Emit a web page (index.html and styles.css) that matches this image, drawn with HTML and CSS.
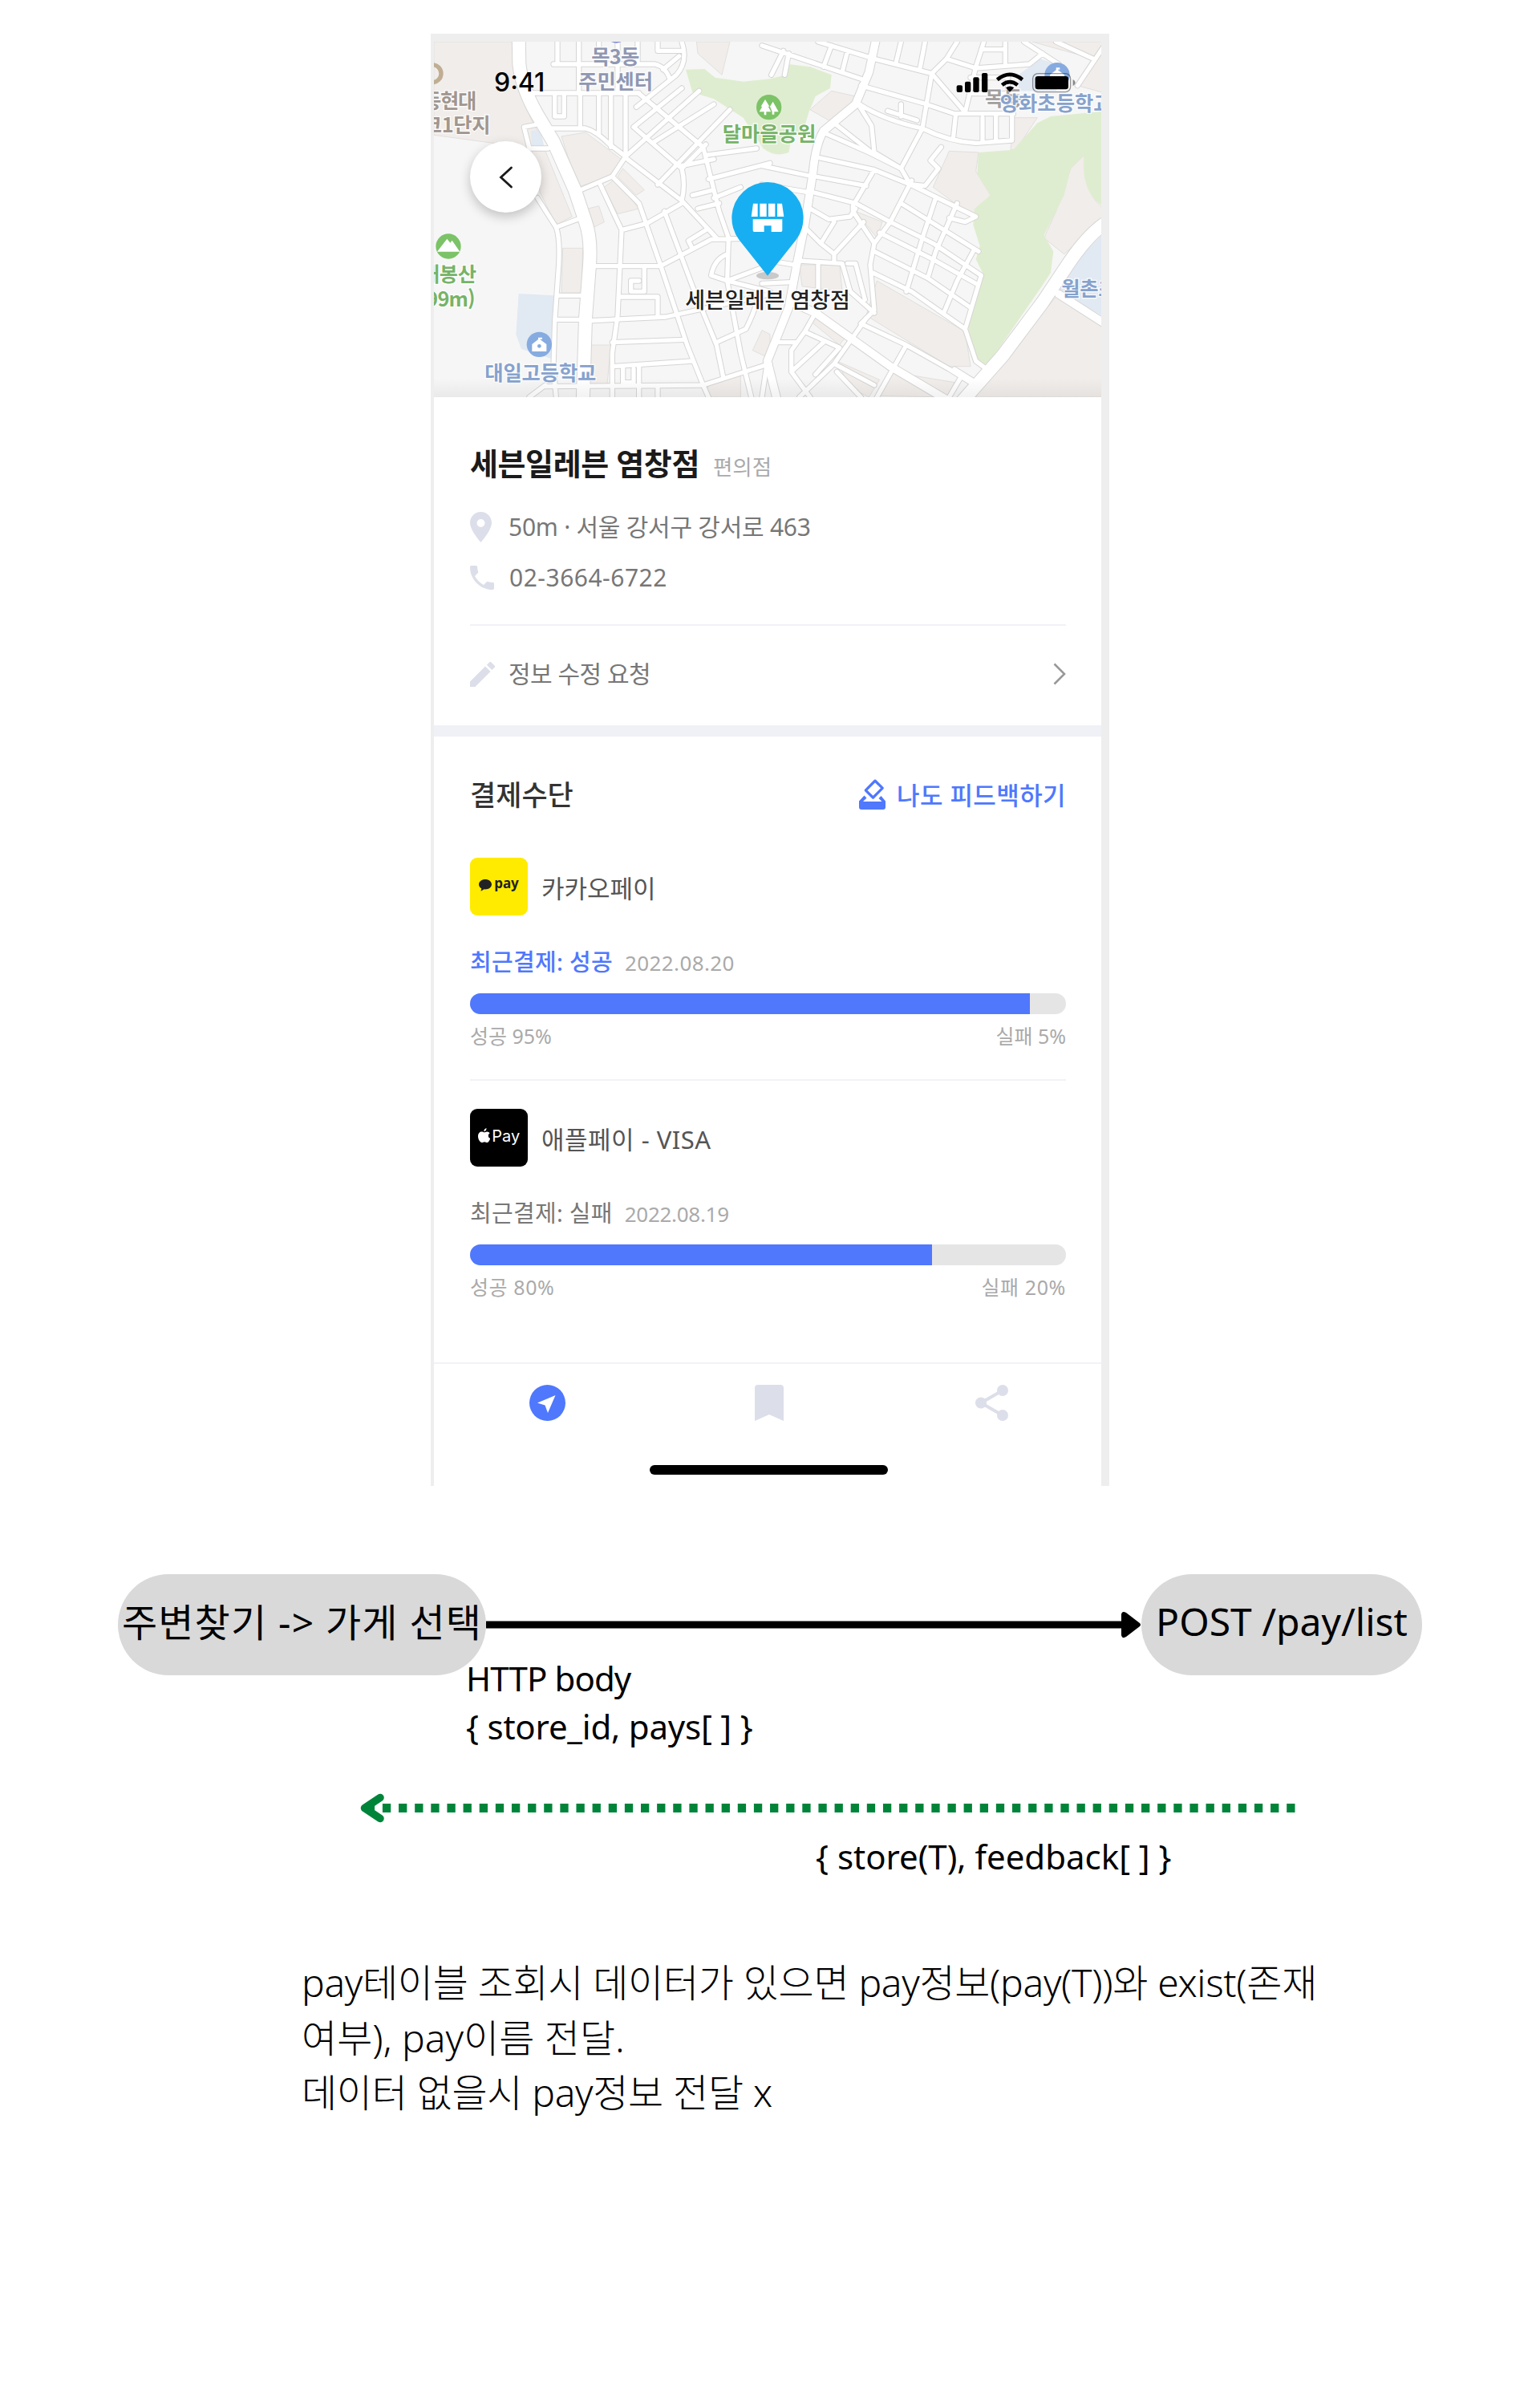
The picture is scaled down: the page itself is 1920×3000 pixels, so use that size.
FILE: index.html
```html
<!DOCTYPE html>
<html lang="ko">
<head>
<meta charset="utf-8">
<title>주변찾기 - 가게 선택</title>
<link rel="stylesheet" href="styles.css">
</head>
<body>
<main class="page">
  <section class="phone">
    <div class="map">
      <svg class="map-canvas" viewBox="33 66 2496 1329" preserveAspectRatio="none">
        <defs>
          <g id="streets">
            <path d="M495 66V150M575 66V258M650 66V150M720 66V258M795 66V150M480 150H860Q900 160 915 205M400 258H800M520 258V345M485 258V345H520M580 258V385M650 258V410M695 258V460M750 258V495M460 390H600Q640 400 690 450L750 495L700 570L570 625M870 66V100H960M960 66Q985 140 940 190L790 310M890 170L950 120"/>
            <path d="M750 495L1025 250M800 260L1040 460L1100 700L1135 800M780 385L960 540M780 385L960 240M750 500L960 660L1090 800M870 600L1140 320M850 445L1080 300M960 540L1050 450M1050 490L1240 465M960 540Q975 600 960 660M960 530L1080 505M1060 580L1290 520M1000 640L1080 620M1020 690L1100 670M1080 650L1180 610"/>
            <path d="M655 600L735 770L720 1090L700 1230V1395M700 570L800 670L880 900L980 1200L1040 1350L1060 1395M735 770L830 745L960 670M895 700L1000 980L1090 1200L1115 1320M640 905H880L1070 805L1290 800M1135 800L1130 960L1180 1230L1220 1395M1130 860Q1080 880 1070 940L1130 960L1290 1000M1130 960L1290 900M1050 770L985 810L1000 840"/>
            <path d="M600 1110L900 1095L1290 1010M700 1190L970 1180M700 1280L1000 1260M450 1355L1040 1350L1290 1270M1090 1190L1200 1140Q1230 1080 1240 1040M820 905V1000H770V960H800M725 1020H870V1090M420 650L490 760Q505 800 500 900L485 1110L480 1280L490 1395M490 760L570 730M500 1015H600M495 1105H600M390 465H460M390 465L370 385L420 375M390 1395L450 1350M800 1275V1395M740 1280V1340H780V1290M870 1355V1395"/>
          </g>
          <g id="streets-east" transform="translate(1260 0)">
            <path d="M0 80L370 205M80 100L35 190M100 110L85 190M210 66L420 130L635 185L690 130L800 165L1000 150L1050 110M260 80L230 160M320 100L300 180M520 66L500 150M610 66L590 170M730 66L690 130M830 66L800 160L760 330M910 66V155M820 95H910M980 66L1110 150M1100 66L1240 130M1290 66L1180 230M370 230L600 295L720 335H940M635 185L600 390L520 540M635 185L760 330M780 200H920V260H790M725 335L715 430M600 390Q700 440 800 445L935 435V340M825 350V440M875 345V440"/>
            <path d="M360 300L410 380L420 480M365 300Q460 360 600 390M270 370L410 480M240 410L400 480L520 540L555 600M215 500L420 545L555 600L800 720L760 740L700 725M200 570L390 605M195 630L350 670L480 740L640 820L820 940M420 545L340 680V700L420 820M470 325L580 360M520 345V300M520 540L420 480M560 600L610 605L660 540L630 510L670 460M560 585L480 740L420 820L405 900L420 1070L370 1120M520 670L810 850M440 780L640 880L800 970M420 850L620 950L780 1060M415 930L560 1000L760 1140M650 650L600 800L540 1000M730 670L650 850L620 950M790 850L730 960L680 1080M820 940L760 1140L800 1260L840 1290"/>
            <path d="M180 690L250 730L330 720L350 690M170 770L220 820L270 740M220 820L270 860L380 740M270 860V890M140 885L300 895L330 1000L420 1080M210 900V1080M320 895H350L385 1030M200 1080L160 1150L110 1220V1300L180 1395M160 1150L290 1210L200 1310M370 1120L540 1200L700 1290L780 1340M390 1100L270 1270L140 1395M540 1200L430 1395M110 1300L230 1190M60 1190H130M270 1270L420 1350M20 1260L0 1395M0 530L190 570M0 600L180 630M0 880L120 900M0 970L110 965M720 1290L800 1340M750 1310L700 1395M280 1300L370 1395"/>
          </g>
        </defs>
        <rect class="land" x="33" y="66" width="2496" height="1329"/>
        <path class="block" d="M33 66H330Q320 220 420 400L440 470L33 415ZM510 420L600 405L740 510L690 570L570 610ZM400 475H450L550 720L490 750L430 630ZM670 610L710 580L800 690L720 710ZM740 540L820 620L790 640L720 570ZM515 838H590L585 1005H510ZM615 1200H695L680 1355H615ZM1015 66H1140L1110 190L1020 110ZM610 690L650 680L670 740L630 760ZM1260 1145L1290 1160V1250L1225 1220ZM1060 1350L1180 1310V1395H1050Z"/>
        <path class="block" transform="translate(1260 0)" d="M700 475L810 480L800 550L855 640L790 720L640 610ZM1155 540L1205 490Q1200 640 1290 700V730Q1220 780 1130 860L1055 800L1100 700ZM1110 1010L1290 1130V1395H800L900 1240ZM430 960L760 1150L780 1280L700 1280L390 1090ZM180 320L260 250L350 270L320 330L250 360ZM1010 66H1290V260L1180 230L1240 130ZM350 700L450 740L430 800ZM280 1260L440 1330L400 1395L330 1360ZM480 1300L720 1340L690 1395L440 1390ZM140 900H290L300 1000L150 980ZM180 1110L210 1090L320 1160L290 1200ZM940 350H1030L950 470H930Z"/>
        <path class="park" d="M975 170L1045 168L1085 200L1190 215L1290 205L1350 190L1360 150L1440 160L1520 190L1515 240L1460 270L1435 330L1420 380L1370 430L1360 480Q1310 500 1265 465L1190 350L1080 280L1000 255Z"/>
        <path class="park" transform="translate(1260 0)" d="M1030 370L1080 345L1290 325V690Q1190 640 1205 490L1155 540L1130 640L1100 700L1055 790L1090 850L1080 930L1040 990L840 1280L800 1250L770 1130L830 940L800 880L815 830L790 750L795 690L855 640L805 560L810 480L940 470Z"/>
        <path class="school" d="M350 1008L485 1015L470 1250L360 1215L340 1160Z"/>
        <path class="school" d="M395 400L430 395L445 455L400 460Z"/>
        <path class="school" transform="translate(1260 0)" d="M1290 770V1100L1110 1000L1160 900ZM960 190L1040 130L1130 160L1100 250H960Z"/>
        <g class="casing"><use href="#streets"/><use href="#streets-east"/></g>
        <g class="casing casing-main">
          <path d="M350 40L352 150Q362 240 420 340L480 440L560 620L600 740Q622 800 615 900L600 1100L590 1420"/>
          <path transform="translate(1260 0)" d="M1300 735Q1220 780 1130 920L1050 1040L900 1240L750 1410"/>
        </g>
        <g class="casing casing-mid" transform="translate(1260 0)">
          <path d="M430 40L400 180L350 300L230 400Q200 450 190 560L160 750L130 900L100 1060L20 1260L60 1420M110 1040L200 1080L480 1280L700 1410M1110 1010L1290 1125"/>
        </g>
        <g class="road"><use href="#streets"/><use href="#streets-east"/></g>
        <g class="road road-main">
          <path d="M350 40L352 150Q362 240 420 340L480 440L560 620L600 740Q622 800 615 900L600 1100L590 1420"/>
          <path transform="translate(1260 0)" d="M1300 735Q1220 780 1130 920L1050 1040L900 1240L750 1410"/>
        </g>
        <g class="road road-mid" transform="translate(1260 0)">
          <path d="M430 40L400 180L350 300L230 400Q200 450 190 560L160 750L130 900L100 1060L20 1260L60 1420M110 1040L200 1080L480 1280L700 1410M1110 1010L1290 1125"/>
        </g>
        <!-- points of interest -->
        <circle cx="27" cy="185" r="33" fill="none" stroke="#bfae93" stroke-width="16"/>
        <ellipse cx="715" cy="60" rx="22" ry="11" fill="#8389d8"/>
        <circle cx="87" cy="831" r="47" fill="#7cc367"/>
        <path d="M45 851L82 803L94 818L101 809L130 851Z" fill="#fff"/>
        <circle cx="1286" cy="311" r="47" fill="#7cc367"/>
        <path d="M1272 282L1288 308H1283L1294 328H1276V340H1268V328H1250L1261 308H1256ZM1301 290L1322 328H1306V338H1298V328L1290 308Z" fill="#fff"/>
        <circle cx="427" cy="1198" r="47" fill="#86abe0"/>
        <path d="M400 1197L423 1179V1172H438V1178H430V1179L454 1197V1224H400Z" fill="#fff"/>
        <circle cx="427" cy="1204" r="7" fill="#86abe0"/>
        <circle cx="2364" cy="191" r="47" fill="#86abe0"/>
        <path d="M2337 190L2360 172V163H2374V170H2367V172L2391 190V217H2337Z" fill="#fff"/>
        <g class="label">
          <text class="t-violet" x="622" y="150" textLength="180">목3동</text>
          <text class="t-violet" x="574" y="243" textLength="278">주민센터</text>
          <text class="t-brown" x="-9" y="314" textLength="202">동현대</text>
          <text class="t-brown" x="-7" y="406" textLength="252">크1단지</text>
          <text class="t-green" x="1112" y="438" textLength="350">달마을공원</text>
          <text class="t-green" x="-15" y="962" textLength="207">매봉산</text>
          <text class="t-green" x="-22" y="1056" textLength="210">(99m)</text>
          <text class="t-blue" x="223" y="1331" textLength="417">대일고등학교</text>
          <text class="t-gray" x="2094" y="305" textLength="140">목동</text>
          <text class="t-blue" x="2150" y="324" textLength="420">양화초등학교</text>
          <text class="t-blue" x="2380" y="1017" textLength="208">월촌초</text>
        </g>
      </svg>
      <span class="clock">9:41</span>
      <svg class="status-icons" viewBox="720 170 460 95">
        <g fill="#000">
          <rect x="728" y="228" width="22" height="26" rx="6"/><rect x="759" y="214" width="22" height="40" rx="6"/>
          <rect x="790" y="198" width="22" height="56" rx="6"/><rect x="822" y="182" width="22" height="72" rx="6"/>
          <rect x="1022" y="194" width="124" height="49" rx="10"/>
        </g>
        <g fill="none" stroke="#000" stroke-width="14"><path d="M880 207Q927 168 974 207"/><path d="M898 227Q927 204 956 227"/></g>
        <path d="M912 237Q927 226 943 237L927 253Z"/>
        <rect x="1013" y="184" width="141" height="69" rx="19" fill="none" stroke="#000" stroke-opacity=".4" stroke-width="4"/>
        <path d="M1163 206Q1172 210 1172 218T1163 231Z" fill-opacity=".45"/>
      </svg>
      <button class="back" aria-label="뒤로"><svg viewBox="0 0 18 28"><path d="M15.500 2L2.500 14L15.500 26"/></svg></button>
      <div class="pin">
        <svg viewBox="0 0 270 370">
          <ellipse cx="135" cy="350" rx="42" ry="14" fill="#000" opacity=".18"/>
          <path d="M135 350L28 215A134 134 0 1 1 242 215Z" fill="#17aff1"/>
          <path d="M81 80H98V129H74ZM106 80H131V129H106ZM138 80H163V129H138ZM171 80H189L196 129H171Z" fill="#fff"/>
          <path d="M80 139H190V181Q190 186 185 186H149V163H122V186H85Q80 186 80 181Z" fill="#fff"/>
        </svg>
        <span class="pin-name">세븐일레븐 염창점</span>
      </div>
    </div>

    <section class="store">
      <header class="store-head"><h1>세븐일레븐 염창점</h1><span class="kind">편의점</span></header>
      <div class="info info-address">
        <svg class="ico-place" viewBox="0 0 27 38"><path fill-rule="evenodd" d="M13.500 0C6 0 0 6 0 13.500C0 23 13.500 38 13.500 38S27 23 27 13.500C27 6 21 0 13.500 0ZM13.500 9A5 5 0 1 1 13.500 19A5 5 0 0 1 13.500 9Z"/></svg>
        <span>50m · 서울 강서구 강서로 463</span>
      </div>
      <div class="info info-phone">
        <svg class="ico-phone" viewBox="3 3 18 18"><path d="M20 15.500c-1.250 0-2.450-.2-3.570-.57a1 1 0 0 0-1.020.24l-2.200 2.200a15.100 15.100 0 0 1-6.590-6.580l2.200-2.210a1 1 0 0 0 .25-1.010A11.400 11.400 0 0 1 8.500 4a1 1 0 0 0-1-1H4a1 1 0 0 0-1 1c0 9.390 7.610 17 17 17a1 1 0 0 0 1-1v-3.500a1 1 0 0 0-1-1z"/></svg>
        <span>02-3664-6722</span>
      </div>
      <div class="info info-edit">
        <svg class="ico-edit" viewBox="3 3 18 18"><path d="M3 17.250V21h3.750L17.810 9.940l-3.750-3.750L3 17.250zM20.710 7.040a1 1 0 0 0 0-1.410l-2.340-2.340a1 1 0 0 0-1.410 0l-1.830 1.830 3.750 3.750 1.830-1.830z"/></svg>
        <span>정보 수정 요청</span>
        <svg class="chevron" viewBox="0 0 16 28"><path d="M1.500 1.500L14 14L1.500 26.500"/></svg>
      </div>
    </section>

    <section class="methods">
      <header class="methods-head">
        <h2>결제수단</h2>
        <a class="feedback">
          <svg viewBox="0 0 33 38"><path fill-rule="evenodd" d="M19 0.800Q20 0 21 0.800L30.500 10.300Q31.300 11.300 30.500 12.200L18.500 24.500Q17.500 25.300 16.500 24.500L7 15Q6.200 14 7 13.100ZM20 4.500L10.500 14L17.500 20.800L27 11.300Z"/><path d="M6.500 20.500L9.500 23.500L5 28H28.500L24.500 24L27.500 21L33 27.500V35Q33 38 30 38H3Q0 38 0 35V27.500Z"/></svg>
          <span>나도 피드백하기</span>
        </a>
      </header>

      <article class="method">
        <div class="brand">
          <span class="tile tile-kakao"><svg viewBox="0 0 16 15"><path d="M8 0C3.600 0 0 2.700 0 6.200C0 8.500 1.400 10.300 3.200 11.300L2.500 14.800L6.600 12.300Q7.300 12.400 8 12.400C12.400 12.400 16 9.700 16 6.200S12.400 0 8 0Z"/></svg><b>pay</b></span>
          <span class="brand-name">카카오페이</span>
        </div>
        <div class="recent ok"><span>최근결제: 성공</span><time>2022.08.20</time></div>
        <div class="bar"><div class="fill" style="width:94%"></div></div>
        <div class="rates"><span>성공 95%</span><span>실패 5%</span></div>
      </article>

      <article class="method method-apple">
        <div class="brand">
          <span class="tile tile-apple"><svg viewBox="0 0 15.500 18"><path d="M10.500 0Q10.600 3.600 7.300 4.300Q7.200 1.200 10.500 0ZM7.800 5.300C9 5.300 9.500 4.400 11.300 4.400Q13.500 4.500 14.700 6.200C11.900 7.900 12.300 11.700 15.300 13C14.400 15.400 12.900 18 11.300 18C10 18 9.600 17.200 8 17.200S6 18 4.700 18C2.600 18 0 14.200 0 10.300C0 6.500 2.300 4.500 4.600 4.500C6.100 4.500 7 5.300 7.800 5.300Z"/></svg><b>Pay</b></span>
          <span class="brand-name">애플페이 - VISA</span>
        </div>
        <div class="recent"><span>최근결제: 실패</span><time>2022.08.19</time></div>
        <div class="bar"><div class="fill" style="width:77.500%"></div></div>
        <div class="rates"><span>성공 80%</span><span>실패 20%</span></div>
      </article>
    </section>

    <nav class="tabs">
      <svg class="tab-go" viewBox="0 0 45 45"><circle cx="22.500" cy="22.500" r="22.500" fill="#4f78fd"/><path d="M32.500 13L23 35L19.500 25.500L10 22.500Z" fill="#fff"/></svg>
      <svg class="tab-save" viewBox="0 0 36 45"><path d="M4 0H32Q36 0 36 4V45L18 37L0 45V4Q0 0 4 0Z"/></svg>
      <svg class="tab-share" viewBox="0 0 41 45"><path d="M34 7L7 22.500L34 38" fill="none" stroke="#dcdee9" stroke-width="4"/><circle cx="34" cy="7" r="7"/><circle cx="7" cy="22.500" r="7"/><circle cx="34" cy="38" r="7"/></svg>
    </nav>
    <div class="home-indicator"></div>
  </section>

  <section class="flow">
    <div class="request">
      <div class="node node-from"><span>주변찾기 -&gt; 가게 선택</span></div>
      <svg class="arrow" viewBox="0 0 817 34"><rect y="12.500" width="796" height="9"/><path d="M792 4Q793 -1 798 2L815 15Q817 17 815 19L798 32Q793 35 792 30Z"/></svg>
      <div class="node node-to"><span>POST /pay/list</span></div>
    </div>
    <div class="payload payload-request"><span class="payload-title">HTTP body</span><span class="payload-fields">{ store_id, pays[ ] }</span></div>
    <svg class="reply" viewBox="0 0 1166 40"><path d="M1165.500 20.500H14" stroke-width="11" stroke-dasharray="10.300 9.830"/><path d="M25 7.500L5.500 20.500L25 33.500" stroke-width="9.500" stroke-linecap="round" stroke-linejoin="round"/></svg>
    <div class="payload payload-reply"><span>{ store(T), feedback[ ] }</span></div>
    <p class="note"><span class="note-long">pay테이블 조회시 데이터가 있으면 pay정보(pay(T))와 exist(존재</span><span>여부), pay이름 전달.</span><span class="note-long">데이터 없을시 pay정보 전달 x</span></p>
  </section>
</main>
</body>
</html>
```
FILE: styles.css
```css
* { box-sizing: border-box; }

body {
  margin: 0;
  background: #fff;
  color: #000;
  font-family: "Noto Sans", "Noto Sans CJK KR", sans-serif;
}

h1, h2, p { margin: 0; }
svg { display: block; flex: none; }
span, time, h1, h2 { white-space: nowrap; }

.page {
  width: 1920px;
  height: 3000px;
  padding-top: 42px;
}

/* phone screen */
.phone {
  width: 846px;
  height: 1810px;
  margin-left: 537px;
  border: solid #eee;
  border-width: 10px 10px 0 4px;
  background: #fff;
}

.map {
  position: relative;
  height: 443px;
  overflow: hidden;
}

.map::after {
  content: "";
  position: absolute;
  inset: auto 0 0;
  height: 24px;
  background: linear-gradient(transparent, rgba(0, 0, 0, .05));
}

.map-canvas { width: 100%; height: 100%; }
.land { fill: #f6f6f6; }
.block { fill: #f1edea; stroke: #e2dfde; stroke-width: 3; }
.park { fill: #deedcf; }
.school { fill: #e1e9f3; }
.casing, .road { fill: none; stroke-linejoin: round; stroke-linecap: round; }
.casing { stroke: #d6d5d4; stroke-width: 22px; }
.road { stroke: #fff; stroke-width: 16px; }
.casing-main { stroke-width: 54px; }
.road-main { stroke-width: 48px; }
.casing-mid { stroke-width: 35px; }
.road-mid { stroke-width: 29px; }

.label {
  font-family: "Noto Sans CJK KR", sans-serif;
  font-size: 76px;
  font-weight: 700;
  stroke: rgba(255, 255, 255, .8);
  stroke-width: 8px;
  paint-order: stroke;
}
.t-violet { fill: #9097b2; }
.t-brown { fill: #a1968f; }
.t-green { fill: #76b367; }
.t-blue { fill: #86a2cd; }
.t-gray { fill: #a39fa0; }

.clock {
  position: absolute;
  left: 75px;
  top: 27px;
  font: 500 32px/48px Inter, sans-serif;
}

.status-icons {
  position: absolute;
  left: 649px;
  top: 34.700px;
  width: 153.300px;
  height: 31.700px;
}

.back {
  position: absolute;
  left: 45px;
  top: 124px;
  display: flex;
  width: 89px;
  height: 89px;
  padding: 0;
  border: 0;
  border-radius: 50%;
  align-items: center;
  justify-content: center;
  background: #fff;
  box-shadow: 0 5px 14px rgba(0, 0, 0, .22);
}
.back svg { width: 18px; height: 28px; fill: none; stroke: #1a1a1a; stroke-width: 2.800; stroke-linecap: round; }

.pin {
  position: absolute;
  left: 311px;
  top: 175px;
  display: flex;
  width: 210px;
  flex-direction: column;
  align-items: center;
}
.pin svg { width: 90px; height: 123.300px; }
.pin-name {
  margin-top: 3px;
  font-size: 27px;
  line-height: 42px;
  font-weight: 500;
  color: #222;
  -webkit-text-stroke: 3px #fff;
  paint-order: stroke;
}

/* store details */
.store {
  height: 423px;
  padding: 55px 44px 0 45px;
  border-bottom: 14px solid #f0f1f6;
}
.store-head { display: flex; height: 66px; align-items: baseline; gap: 17px; }
h1 { font-size: 38px; line-height: 54px; font-weight: 700; color: #1b1b1b; letter-spacing: -.4px; }
.kind { font-size: 26.500px; color: #aaa; font-weight: 400; }

.info {
  display: flex;
  align-items: center;
  color: #777;
  font-size: 30px;
  line-height: 44px;
}
.info svg { fill: #dcdee9; }
.info-address { height: 82px; letter-spacing: -.25px; }
.info-phone { height: 44px; letter-spacing: .5px; }
.info-edit {
  height: 122px;
  margin-top: 36px;
  border-top: 2px solid #f2f2f7;
  letter-spacing: -.5px;
}
.ico-place { width: 27px; height: 38px; margin-right: 21px; }
.ico-phone { width: 30px; height: 30px; margin-right: 19px; }
.ico-edit { width: 31px; height: 31px; margin-right: 17px; }
.info .chevron { width: 16px; height: 28px; margin-left: auto; fill: none; stroke: #999; stroke-width: 2.600; }

/* payment methods */
.methods { height: 780px; padding: 44px 44px 0 45px; }
.methods-head { display: flex; height: 58px; align-items: center; justify-content: space-between; }
h2 { font-size: 35px; line-height: 54px; font-weight: 500; color: #333; }
.feedback {
  display: flex;
  align-items: center;
  gap: 14px;
  color: #4f78fd;
  font-size: 31px;
  line-height: 46px;
  font-weight: 500;
  letter-spacing: .4px;
}
.feedback svg { width: 33px; height: 38px; margin-top: -2px; fill: #4f78fd; }

.method { height: 325px; padding-top: 49px; }
.method-apple { padding-top: 35px; border-top: 2px solid #f2f2f7; }
.brand { display: flex; height: 72px; align-items: center; gap: 17px; }
.tile {
  display: flex;
  width: 72px;
  height: 72px;
  border-radius: 9px;
  align-items: center;
  justify-content: center;
  gap: 3px;
}
.tile b { line-height: 24px; }
.tile-kakao { padding-bottom: 4px; background: #ffeb00; color: #222; }
.tile-kakao svg { width: 16px; height: 15px; fill: #222; }
.tile-kakao b { margin-top: -4px; font-size: 17px; }
.tile-apple { padding-bottom: 4px; gap: 2px; background: #000; color: #fff; }
.tile-apple svg { width: 15.500px; height: 18px; margin-top: -2px; fill: #fff; }
.tile-apple b { font: 400 20px/24px Inter, sans-serif; }
.brand-name { margin-top: 3px; font-size: 31px; line-height: 44px; color: #555; }
.method-apple .brand-name { letter-spacing: .5px; }

.recent {
  display: flex;
  height: 43px;
  margin-top: 36px;
  align-items: baseline;
  gap: 15px;
  font-size: 29px;
  line-height: 43px;
  color: #777;
  letter-spacing: .3px;
}
.recent.ok { color: #4f78fd; font-weight: 500; }
.recent time { color: #aaa; font-size: 26px; font-weight: 400; letter-spacing: .4px; }
.method-apple .recent time { letter-spacing: -.3px; }
.bar { height: 26px; margin-top: 18px; border-radius: 13px; background: #e5e5e5; overflow: hidden; }
.fill { height: 100%; background: #4f78fd; }
.rates { display: flex; justify-content: space-between; margin-top: 8px; font-size: 25px; line-height: 38px; color: #aaa; }
.method-apple .rates { letter-spacing: .6px; }

.tabs {
  display: grid;
  grid-template-columns: repeat(3, 277px);
  height: 128px;
  padding: 26px 0 0 4px;
  border-top: 2px solid #f2f2f7;
  justify-content: center;
  justify-items: center;
  fill: #dcdee9;
}
.tab-go { width: 45px; height: 45px; }
.tab-save { width: 36px; height: 45px; }
.tab-share { width: 41px; height: 45px; }
.home-indicator { width: 297px; height: 12px; margin-left: 269px; border-radius: 6px; background: #000; }

/* request and reply diagram */
.flow { padding: 110px 147px 0; }
.request { display: flex; height: 126px; align-items: center; }
.node {
  display: flex;
  height: 126px;
  border-radius: 63px;
  align-items: center;
  justify-content: center;
  background: #d9d9d9;
  font-size: 48px;
  line-height: 64px;
}
.node-from { width: 459px; letter-spacing: 1.200px; }
.node-from span { margin-top: -6px; }
.node-to { width: 350px; }
.node-to span { margin-top: -9px; }
.arrow { width: 817px; height: 34px; }

.payload { display: flex; flex-direction: column; font-size: 42px; line-height: 60px; }
.payload-title { letter-spacing: -.9px; }
.payload-fields { letter-spacing: -.2px; }
.payload-request { height: 120px; margin: -26px 0 0 434px; }
.reply { width: 1166px; height: 40px; margin: 51px 0 0 302px; fill: none; stroke: #00843a; }
.payload-reply { margin: 11px 0 0 870px; }
.note { display: flex; flex-direction: column; margin: 93px 0 0 229px; font-size: 48px; line-height: 68.500px; font-weight: 300; }
.note-long { letter-spacing: -.330px; }
```
